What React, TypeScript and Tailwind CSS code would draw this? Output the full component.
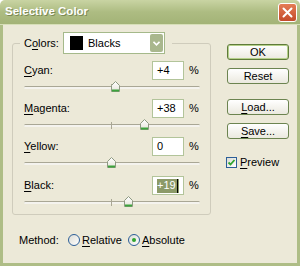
import React from 'react'

const font = { fontFamily: '"Liberation Sans", Arial, sans-serif' }

type Row = { key: string; post: string; value: string; num: number; block: string; selected?: boolean }

const rows: Row[] = [
  { key: 'C', post: 'yan:', value: '+4', num: 4, block: 'h-[19px]' },
  { key: 'M', post: 'agenta:', value: '+38', num: 38, block: 'h-[19px]' },
  { key: 'Y', post: 'ellow:', value: '0', num: 0, block: 'h-[20px]' },
  { key: 'B', post: 'lack:', value: '+19', num: 19, block: 'h-[19px]', selected: true },
]

function Thumb() {
  return (
    <svg width="9" height="11" viewBox="0 0 9 11">
      <defs>
        <linearGradient id="tg" x1="0" y1="0" x2="0" y2="1">
          <stop offset="0" stopColor="#ffffff" />
          <stop offset="1" stopColor="#e6e4da" />
        </linearGradient>
      </defs>
      <path d="M0.5 4.5 L4.5 0.5 L8.5 4.5 L8.5 10.5 L0.5 10.5 Z" fill="url(#tg)" stroke="#8e9a82" />
      <path d="M1 9.5 H8" stroke="#3ca33c" strokeWidth="2" />
    </svg>
  )
}

function Slider({ num, block }: { num: number; block: string }) {
  const left = ((num + 100) / 200) * 175 - 4.5
  return (
    <div className={`relative ${block}`}>
      <div className="absolute left-0 right-0 top-[6px] h-[3px] rounded-full border-t border-[#a9a795] bg-[#f4f3ee]" />
      <div className="absolute left-[87px] top-[4px] h-[7px] w-px bg-[#a9a795]" />
      <div className="absolute top-[1px] h-[11px] w-[9px]" style={{ left }}>
        <Thumb />
      </div>
    </div>
  )
}

function Btn({ children, primary }: { children: React.ReactNode; primary?: boolean }) {
  return (
    <div
      className={`flex h-[16px] w-[62px] items-center justify-center rounded-[3px] border bg-gradient-to-b from-white to-[#ebe9df] text-[11px] leading-none text-black ${
        primary ? 'border-[#5f7b3a] shadow-[inset_0_0_0_1px_#b5d08a]' : 'border-[#6c8450]'
      }`}
    >
      {children}
    </div>
  )
}

function U({ children }: { children: React.ReactNode }) {
  return <span className="underline decoration-1 underline-offset-[2px]">{children}</span>
}

function Radio({ checked }: { checked?: boolean }) {
  return (
    <span className="flex h-[12px] w-[12px] items-center justify-center rounded-full border border-[#2c5f98] bg-gradient-to-br from-[#dcdcd4] to-white">
      {checked ? <span className="h-[4px] w-[4px] rounded-full bg-[#2fa52f]" /> : null}
    </span>
  )
}

export default function App() {
  return (
    <div className="flex h-[266px] w-[300px] flex-col overflow-hidden text-[11px] text-black" style={font}>
      <div className="flex h-[25px] items-center justify-between rounded-t-[5px] border-b border-[#d7dfb8] bg-gradient-to-b from-[#c9d4a3] via-[#adbc82] to-[#a3b377] pl-[5px] pr-[3px]">
        <span className="text-[11.5px] font-bold text-white [text-shadow:1px_1px_0_#7c8a55]">Selective Color</span>
        <div className="flex h-[19px] w-[19px] items-center justify-center rounded-[3px] border border-white bg-gradient-to-b from-[#e47c55] to-[#c44a2a]">
          <svg width="11" height="11" viewBox="0 0 11 11">
            <path d="M1.5 1.5 L9.5 9.5 M9.5 1.5 L1.5 9.5" stroke="white" strokeWidth="2" strokeLinecap="round" />
          </svg>
        </div>
      </div>

      <div className="flex flex-1 flex-col border-x-[3px] border-b-[3px] border-[#aebd86] bg-[#ece9d8]">
        <div className="flex">
          <fieldset className="ml-[9px] mt-[7px] w-[199px] rounded-[3px] border border-[#cfccbc] pl-[11px] pr-[10px]">
            <legend className="-ml-[4px] pl-[4px] pr-[7px]">
              <div className="flex h-[22px] items-center">
                <span className="w-[39px]">
                  C<U>o</U>lors:
                </span>
                <div className="flex h-[22px] w-[102px] items-center border border-[#a5b98a] bg-white">
                  <span className="ml-[6px] h-[14px] w-[13px] bg-black" />
                  <span className="ml-[5px]">Blacks</span>
                  <span className="ml-auto mr-px flex h-[18px] w-[13px] items-center justify-center rounded-[2px] bg-[#a9b78d]">
                    <svg width="7" height="5" viewBox="0 0 7 5">
                      <path d="M0.5 0.8 L3.5 3.8 L6.5 0.8" stroke="white" strokeWidth="1.6" fill="none" />
                    </svg>
                  </span>
                </div>
              </div>
            </legend>
            <div className="mt-[7px] flex flex-col">
              {rows.map((r) => (
                <div key={r.post}>
                  <div className="flex h-[19px] items-center">
                    <span className="w-[128px]">
                      <U>{r.key}</U>
                      {r.post}
                    </span>
                    <div className="flex h-[19px] w-[32px] items-center border border-[#b2c49a] bg-white pl-[4px]">
                      {r.selected ? (
                        <span className="flex h-[14px] items-center bg-[#8c9a68] pr-[1px] text-white">
                          {r.value}
                          <span className="ml-px h-[14px] w-px bg-black" />
                        </span>
                      ) : (
                        r.value
                      )}
                    </div>
                    <span className="ml-[5px]">%</span>
                  </div>
                  <Slider num={r.num} block={r.block} />
                </div>
              ))}
            </div>
          </fieldset>

          <div className="ml-[16px] mt-[19px] flex flex-col">
            <Btn primary>OK</Btn>
            <div className="mt-[8px]">
              <Btn>Reset</Btn>
            </div>
            <div className="mt-[15px]">
              <Btn>
                <U>L</U>oad...
              </Btn>
            </div>
            <div className="mt-[8px]">
              <Btn>
                <U>S</U>ave...
              </Btn>
            </div>
            <div className="mt-[15px] flex items-center">
              <span className="-ml-px flex h-[11px] w-[11px] items-center justify-center border border-[#2c5f98] bg-gradient-to-br from-[#dcdcd4] to-white">
                <svg width="9" height="9" viewBox="0 0 9 9">
                  <path d="M1.5 4.5 L3.5 6.5 L7.5 2" stroke="#2fa52f" strokeWidth="1.8" fill="none" />
                </svg>
              </span>
              <span className="ml-[3px]">
                <U>P</U>review
              </span>
            </div>
          </div>
        </div>

        <div className="ml-[16px] mt-[18px] flex h-[14px] items-center">
          <span className="w-[49px]">Method:</span>
          <div className="flex w-[60px] items-center">
            <Radio />
            <span className="ml-[2px]">
              <U>R</U>elative
            </span>
          </div>
          <div className="flex items-center">
            <Radio checked />
            <span className="ml-[2px]">
              <U>A</U>bsolute
            </span>
          </div>
        </div>
      </div>
    </div>
  )
}
